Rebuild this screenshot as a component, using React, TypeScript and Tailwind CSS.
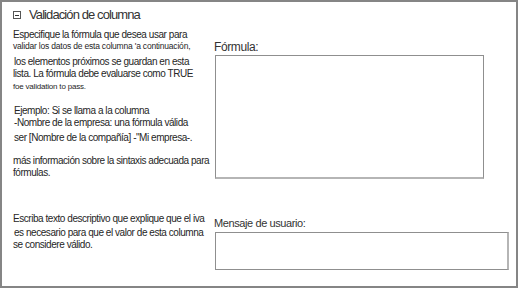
export default function App() {
  return (
    <div
      className="w-[518px] h-[288px] border-2 border-[#858585] bg-white text-[#262626]"
      style={{ fontFamily: '"Liberation Sans", Arial, sans-serif' }}
    >
      {/* header */}
      <div className="h-[27px] pt-[4px] pl-[11px] flex items-start">
        <div className="mt-[5px] w-[8px] h-[8px] border border-[#555] flex items-center justify-center">
          <div className="w-[4px] h-px bg-[#333]" />
        </div>
        <span className="ml-[8px] text-[13px] tracking-[-0.9px] leading-[18px] text-[#333]">
          Validación de columna
        </span>
      </div>

      {/* formula row */}
      <div className="flex">
        <div className="w-[212px] pl-[11px] text-[10px] tracking-[-0.45px] whitespace-nowrap">
          <div className="leading-[12px]">Especifique la fórmula que desea usar para</div>
          <div className="leading-[10px] text-[8.5px] tracking-[-0.2px]">
            validar los datos de esta columna 'a continuación,
          </div>
          <div className="mt-[5px] leading-[12px] pl-px">los elementos próximos se guardan en esta</div>
          <div className="leading-[12px]">lista. La fórmula debe evaluarse como TRUE</div>
          <div className="mt-[2px] leading-[10px] text-[8px] tracking-[-0.2px]">foe validation to pass.</div>
          <div className="mt-[13px] leading-[12px] pl-px">Ejemplo: Si se llama a la columna</div>
          <div className="leading-[12px] pl-px">-Nombre de la empresa: una fórmula válida</div>
          <div className="mt-[3px] leading-[12px] pl-px">ser [Nombre de la compañía] -"Mi empresa-.</div>
          <div className="mt-[11px] leading-[12px]">más información sobre la sintaxis adecuada para</div>
          <div className="leading-[12px]">fórmulas.</div>
        </div>
        <div className="flex flex-col">
          <div className="mt-[11px] text-[12px] tracking-[-0.4px] leading-[14px] text-[#333]">Fórmula:</div>
          <div className="mt-px ml-px w-[269px] h-[124px] border border-[#8f8f8f] border-b-2 border-b-[#b5b5b5]" />
        </div>
      </div>

      {/* user message row */}
      <div className="flex">
        <div className="w-[212px] pl-[11px] text-[10px] tracking-[-0.45px] whitespace-nowrap mt-[34px]">
          <div className="leading-[12px]">Escriba texto descriptivo que explique que el iva</div>
          <div className="mt-[2px] leading-[12px] pl-px">es necesario para que el valor de esta columna</div>
          <div className="leading-[11px]">se considere válido.</div>
        </div>
        <div className="flex flex-col">
          <div className="mt-[37px] text-[11px] tracking-[-0.4px] leading-[14px] text-[#333]">
            Mensaje de usuario:
          </div>
          <div className="mt-[2px] ml-px w-[294px] h-[38px] border border-[#8f8f8f] border-r-2 border-r-[#b5b5b5]" />
        </div>
      </div>
    </div>
  );
}
